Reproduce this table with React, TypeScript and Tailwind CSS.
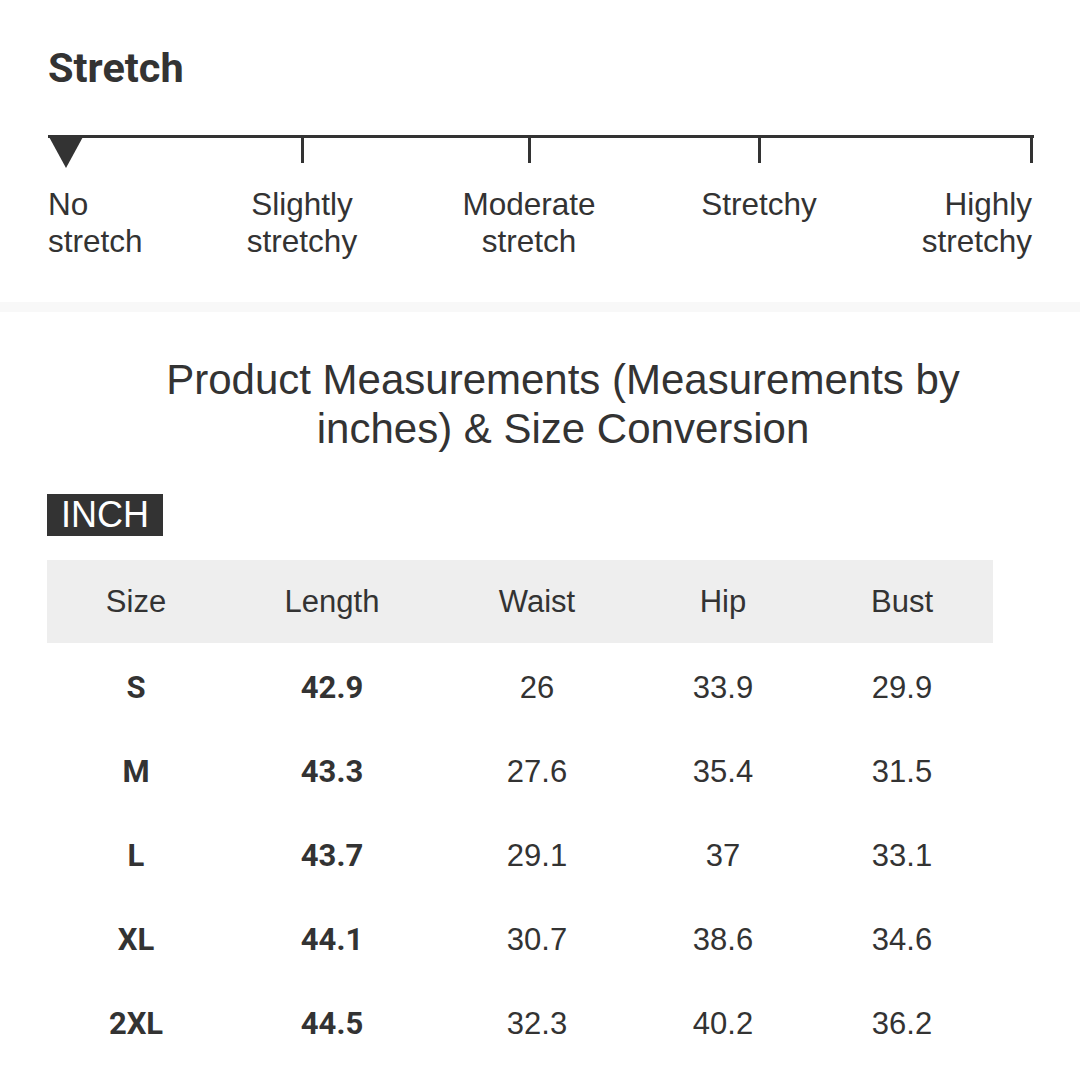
import React from "react";

const rows = [
  ["S", "42.9", "26", "33.9", "29.9"],
  ["M", "43.3", "27.6", "35.4", "31.5"],
  ["L", "43.7", "29.1", "37", "33.1"],
  ["XL", "44.1", "30.7", "38.6", "34.6"],
  ["2XL", "44.5", "32.3", "40.2", "36.2"],
];

const sans = "font-['Liberation_Sans',Arial,sans-serif]";
const bold = "font-['Roboto',sans-serif] font-bold";

export default function App() {
  return (
    <div className={`w-[1080px] min-h-[1084px] bg-white text-[#333333] ${sans}`}>
      <section className="px-[48px] pt-[44px] pb-[42px]">
        <h2 className={`${bold} text-[41.5px] leading-[48px] text-[#333333]`}>Stretch</h2>
        <svg className="mt-[43px] block" width="986" height="34" viewBox="0 0 986 34">
          <rect x="0" y="0" width="986" height="3" fill="#333333" />
          <rect x="253" y="0" width="3" height="28" fill="#333333" />
          <rect x="480" y="0" width="3" height="28" fill="#333333" />
          <rect x="710" y="0" width="3" height="28" fill="#333333" />
          <rect x="982" y="0" width="3" height="28" fill="#333333" />
          <polygon points="0,0 36,0 18,33" fill="#333333" />
        </svg>
        <div className="mt-[17px] flex w-[984px] text-[31.5px] leading-[37px]">
          <div className="w-[150px] text-left">No<br />stretch</div>
          <div className="ml-[29px] w-[150px] text-center">Slightly<br />stretchy</div>
          <div className="ml-[77px] w-[150px] text-center">Moderate<br />stretch</div>
          <div className="ml-[80px] w-[150px] text-center">Stretchy</div>
          <div className="flex-1 text-right">Highly<br />stretchy</div>
        </div>
      </section>
      <div className="h-[10px] bg-[#f8f8f8]" />
      <section className="pt-[43px]">
        <h3 className="ml-[113px] w-[900px] text-center text-[42px] leading-[49px]">
          Product Measurements (Measurements by inches) &amp; Size Conversion
        </h3>
        <div className="mt-[41px] px-[47px]">
          <div className="inline-block bg-[#333333] px-[14px] text-[36px] leading-[42px] text-white">INCH</div>
          <div className="mt-[24px] w-[946px]">
            <div className="grid h-[83px] grid-cols-[178px_214px_196px_176px_182px] items-center bg-[#eeeeee] pt-[2px] text-center text-[31px]">
              <div>Size</div>
              <div>Length</div>
              <div>Waist</div>
              <div>Hip</div>
              <div>Bust</div>
            </div>
            <div className="pt-[3px]">
              {rows.map((r) => (
                <div key={r[0]} className="grid h-[84px] grid-cols-[178px_214px_196px_176px_182px] items-center text-center text-[31px]">
                  <div className={bold}>{r[0]}</div>
                  <div className={bold}>{r[1]}</div>
                  <div>{r[2]}</div>
                  <div>{r[3]}</div>
                  <div>{r[4]}</div>
                </div>
              ))}
            </div>
          </div>
        </div>
      </section>
    </div>
  );
}
